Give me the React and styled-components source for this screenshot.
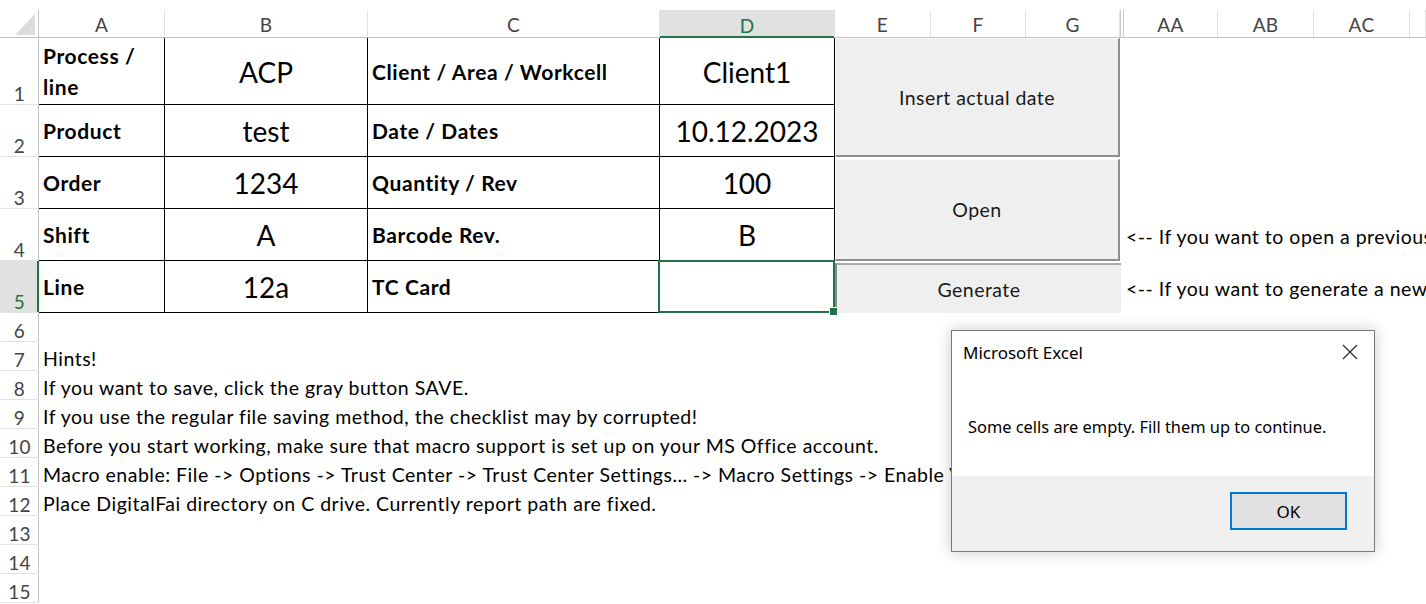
import React from 'react';
import styled, { createGlobalStyle } from 'styled-components';

const GlobalStyle = createGlobalStyle`
  html, body {
    margin: 0;
    padding: 0;
    background: #fff;
  }
  body {
    font-family: Lato, "Liberation Sans", sans-serif;
    color: #000;
    overflow: hidden;
  }
`;

// column template shared by the header strip and the sheet body
const COLS = '39px 126px 203px 292px 175px 96px 95px 94px 4px 94px 96px 96px 1fr';
const GREEN = '#217346';

const Page = styled.div`
  position: relative;
  width: 1426px;
  height: 604px;
  padding-top: 10px;
  box-sizing: border-box;
  overflow: hidden;
`;

const HeaderRow = styled.div`
  display: grid;
  grid-template-columns: ${COLS};
  height: 28px;
  box-sizing: border-box;
  border-bottom: 1px solid #c4c4c4;
`;

const Corner = styled.div`
  display: flex;
  align-items: flex-end;
  justify-content: flex-end;
  padding: 0 3px 2px 0;
  border-right: 1px solid #c4c4c4;
`;

const CornerTriangle = styled.div`
  width: 20px;
  height: 21px;
  background: #dcdcdc;
  clip-path: polygon(100% 0, 100% 100%, 0 100%);
`;

const ColHead = styled.div`
  display: flex;
  align-items: flex-end;
  justify-content: center;
  padding-bottom: 1px;
  font-size: 19px;
  letter-spacing: 0.3px;
  color: ${(p) => (p.$active ? GREEN : '#444')};
  background: ${(p) => (p.$active ? '#e1e1e1' : '#fff')};
  border-right: 1px solid #e1e1e1;
  box-shadow: ${(p) => (p.$active ? `inset 0 -2px 0 ${GREEN}` : 'none')};
  margin-bottom: ${(p) => (p.$active ? '-1px' : '0')};
`;

const Freeze = styled.div`
  border-left: 1px solid #c8c8c8;
  border-right: 1px solid #c8c8c8;
`;

const Body = styled.div`
  display: grid;
  grid-template-columns: ${COLS};
  grid-template-rows: 67px repeat(4, 52px) repeat(10, 29px);
`;

const RowHead = styled.div`
  grid-column: 1;
  grid-row: ${(p) => p.$row};
  display: flex;
  align-items: flex-end;
  justify-content: center;
  padding-bottom: 1px;
  font-size: 19px;
  line-height: 1;
  letter-spacing: 0.3px;
  color: ${(p) => (p.$active ? GREEN : '#444')};
  background: ${(p) => (p.$active ? '#e1e1e1' : '#fff')};
  border-bottom: 1px solid #e1e1e1;
  box-shadow: inset ${(p) => (p.$active ? `-2px 0 0 ${GREEN}` : '-1px 0 0 #c4c4c4')};
`;

const Cell = styled.div`
  position: relative;
  grid-column: ${(p) => p.$col};
  grid-row: ${(p) => p.$row};
  display: flex;
  align-items: center;
  justify-content: ${(p) => (p.$value ? 'center' : 'flex-start')};
  padding: ${(p) => (p.$value ? '2px 4px 0' : '0 4px')};
  border-right: 1px solid #000;
  border-bottom: 1px solid #000;
  font-size: ${(p) => (p.$value ? '28px' : '21px')};
  font-weight: ${(p) => (p.$value ? 400 : 700)};
  letter-spacing: ${(p) => (p.$value ? '0' : '0.6px')};
  line-height: 31px;
`;

const Selection = styled.div`
  position: absolute;
  left: -2px;
  top: -1px;
  right: -1px;
  bottom: -1px;
  border: 2px solid ${GREEN};
`;

const FillHandle = styled.div`
  position: absolute;
  right: -4px;
  bottom: -4px;
  width: 7px;
  height: 7px;
  background: ${GREEN};
  border-top: 1px solid #fff;
  border-left: 1px solid #fff;
`;

const SheetButton = styled.div`
  grid-column: 6 / 9;
  grid-row: ${(p) => p.$row};
  margin-top: ${(p) => p.$gap}px;
  display: flex;
  align-items: center;
  justify-content: center;
  background: #efefef;
  font-size: 19.5px;
  letter-spacing: 0.45px;
  color: #1a1a1a;
  box-sizing: border-box;
  border-right: ${(p) => (p.$pressed ? 'none' : '2px solid #8e8e8e')};
  border-bottom: ${(p) => (p.$pressed ? 'none' : '2px solid #8e8e8e')};
  border-top: ${(p) => (p.$pressed ? '2px solid #a8a8a8' : '1px solid #fafafa')};
  border-left: ${(p) => (p.$pressed ? '2px solid #8a8a8a' : '1px solid #fafafa')};
  margin-right: ${(p) => (p.$pressed ? '-1px' : '0')};
`;

const Note = styled.div`
  grid-column: ${(p) => p.$col} / -1;
  grid-row: ${(p) => p.$row};
  display: flex;
  align-items: center;
  padding-left: ${(p) => p.$pad}px;
  padding-top: 3px;
  font-size: 19.5px;
  letter-spacing: 0.5px;
  white-space: nowrap;
  overflow: hidden;
`;

const Dialog = styled.div`
  position: absolute;
  left: 951px;
  top: 330px;
  width: 424px;
  height: 222px;
  box-sizing: border-box;
  display: flex;
  flex-direction: column;
  background: #fff;
  border: 1px solid #7a7a7a;
  box-shadow: 0 0 14px rgba(0, 0, 0, 0.22);
  font-family: "Noto Sans", "Open Sans", sans-serif;
`;

const TitleBar = styled.div`
  display: flex;
  align-items: center;
  justify-content: space-between;
  height: 42px;
  padding: 0 16px 0 11px;
  font-size: 17px;
`;

const Message = styled.div`
  flex: 1;
  display: flex;
  align-items: center;
  padding: 4px 0 0 16px;
  font-size: 16.4px;
`;

const Footer = styled.div`
  display: flex;
  justify-content: flex-end;
  align-items: flex-start;
  height: 75px;
  padding: 16px 27px 0 0;
  box-sizing: border-box;
  background: #f0f0f0;
`;

const OkButton = styled.div`
  width: 117px;
  height: 38px;
  box-sizing: border-box;
  display: flex;
  align-items: center;
  justify-content: center;
  background: #e1e1e1;
  border: 2px solid #0078d7;
  font-size: 17px;
`;

const sheetRows = [
  ['Process / line', 'ACP', 'Client / Area / Workcell', 'Client1'],
  ['Product', 'test', 'Date / Dates', '10.12.2023'],
  ['Order', '1234', 'Quantity / Rev', '100'],
  ['Shift', 'A', 'Barcode Rev.', 'B'],
  ['Line', '12a', 'TC Card', ''],
];

const hints = [
  'Hints!',
  'If you want to save, click the gray button SAVE.',
  'If you use the regular file saving method, the checklist may by corrupted!',
  'Before you start working, make sure that macro support is set up on your MS Office account.',
  'Macro enable: File -> Options -> Trust Center -> Trust Center Settings\u2026 -> Macro Settings -> Enable VBA macros',
  'Place DigitalFai directory on C drive. Currently report path are fixed.',
];

const columns = ['A', 'B', 'C', 'D', 'E', 'F', 'G', null, 'AA', 'AB', 'AC', ''];

const App = () => (
  <Page>
    <GlobalStyle />
    <HeaderRow>
      <Corner>
        <CornerTriangle />
      </Corner>
      {columns.map((c, i) =>
        c === null ? <Freeze key={i} /> : <ColHead key={i} $active={c === 'D'}>{c}</ColHead>
      )}
    </HeaderRow>

    <Body>
      {Array.from({ length: 15 }, (_, i) => (
        <RowHead key={i} $row={i + 1} $active={i === 4}>{i + 1}</RowHead>
      ))}

      {sheetRows.map((r, i) => (
        <React.Fragment key={i}>
          <Cell $col={2} $row={i + 1}>{r[0]}</Cell>
          <Cell $col={3} $row={i + 1} $value>{r[1]}</Cell>
          <Cell $col={4} $row={i + 1}>{r[2]}</Cell>
          <Cell $col={5} $row={i + 1} $value>
            {r[3]}
            {i === 4 && (
              <Selection>
                <FillHandle />
              </Selection>
            )}
          </Cell>
        </React.Fragment>
      ))}

      <SheetButton $row="1 / 3" $gap={0}>Insert actual date</SheetButton>
      <SheetButton $row="3 / 5" $gap={2}>Open</SheetButton>
      <SheetButton $row="5" $gap={2} $pressed>Generate</SheetButton>

      <Note $col={10} $row={4} $pad={2}>&lt;-- If you want to open a previous checklist</Note>
      <Note $col={10} $row={5} $pad={2}>&lt;-- If you want to generate a new checklist</Note>

      {hints.map((h, i) => (
        <Note key={i} $col={2} $row={i + 7} $pad={4}>{h}</Note>
      ))}
    </Body>

    <Dialog>
      <TitleBar>
        <span>Microsoft Excel</span>
        <svg width="16" height="16" viewBox="0 0 16 16">
          <path d="M1 1 L15 15 M15 1 L1 15" stroke="#222" strokeWidth="1.1" fill="none" />
        </svg>
      </TitleBar>
      <Message>Some cells are empty. Fill them up to continue.</Message>
      <Footer>
        <OkButton>OK</OkButton>
      </Footer>
    </Dialog>
  </Page>
);

export default App;
